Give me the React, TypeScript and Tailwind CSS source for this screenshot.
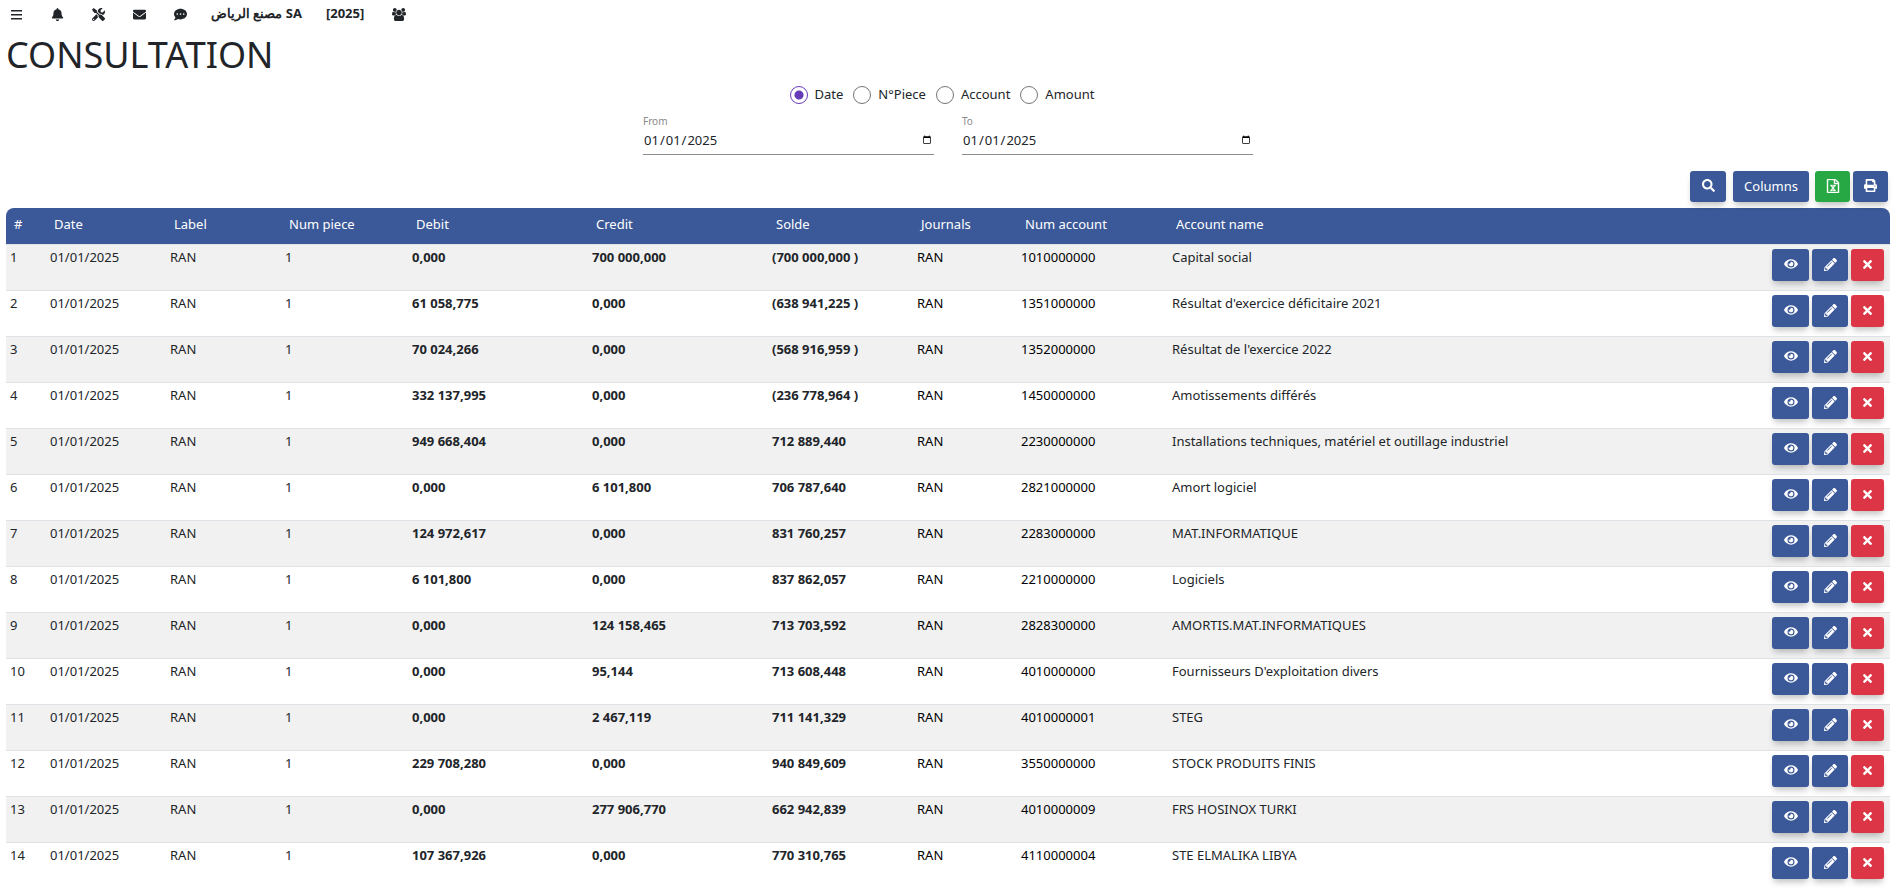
import { useState } from "react";
import {
  FaBell,
  FaCommentDots,
  FaEnvelope,
  FaEye,
  FaPencilAlt,
  FaPrint,
  FaSearch,
  FaTimes,
  FaTools,
} from "react-icons/fa";

interface Entry {
  debit: string;
  credit: string;
  solde: string;
  account: string;
  name: string;
}

const entries: Entry[] = [
  { debit: "0,000", credit: "700 000,000", solde: "(700 000,000 )", account: "1010000000", name: "Capital social" },
  { debit: "61 058,775", credit: "0,000", solde: "(638 941,225 )", account: "1351000000", name: "Résultat d'exercice déficitaire 2021" },
  { debit: "70 024,266", credit: "0,000", solde: "(568 916,959 )", account: "1352000000", name: "Résultat de l'exercice 2022" },
  { debit: "332 137,995", credit: "0,000", solde: "(236 778,964 )", account: "1450000000", name: "Amotissements différés" },
  { debit: "949 668,404", credit: "0,000", solde: "712 889,440", account: "2230000000", name: "Installations techniques, matériel et outillage industriel" },
  { debit: "0,000", credit: "6 101,800", solde: "706 787,640", account: "2821000000", name: "Amort logiciel" },
  { debit: "124 972,617", credit: "0,000", solde: "831 760,257", account: "2283000000", name: "MAT.INFORMATIQUE" },
  { debit: "6 101,800", credit: "0,000", solde: "837 862,057", account: "2210000000", name: "Logiciels" },
  { debit: "0,000", credit: "124 158,465", solde: "713 703,592", account: "2828300000", name: "AMORTIS.MAT.INFORMATIQUES" },
  { debit: "0,000", credit: "95,144", solde: "713 608,448", account: "4010000000", name: "Fournisseurs D'exploitation divers" },
  { debit: "0,000", credit: "2 467,119", solde: "711 141,329", account: "4010000001", name: "STEG" },
  { debit: "229 708,280", credit: "0,000", solde: "940 849,609", account: "3550000000", name: "STOCK PRODUITS FINIS" },
  { debit: "0,000", credit: "277 906,770", solde: "662 942,839", account: "4010000009", name: "FRS HOSINOX TURKI" },
  { debit: "107 367,926", credit: "0,000", solde: "770 310,765", account: "4110000004", name: "STE ELMALIKA LIBYA" },
];

const columns = [
  { label: "#", width: "w-10" },
  { label: "Date", width: "w-30" },
  { label: "Label", width: "w-[115px]" },
  { label: "Num piece", width: "w-[127px]" },
  { label: "Debit", width: "w-45" },
  { label: "Credit", width: "w-45" },
  { label: "Solde", width: "w-[145px]" },
  { label: "Journals", width: "w-26" },
  { label: "Num account", width: "w-[151px]" },
  { label: "Account name", width: "" },
];

const navIcons = [
  { label: "Menu", href: "#menu", Icon: MenuIcon },
  { label: "Alerts", href: "#alerts", Icon: FaBell },
  { label: "Tools", href: "#tools", Icon: FaTools },
  { label: "Mail", href: "#mail", Icon: FaEnvelope },
  { label: "Chat", href: "#chat", Icon: FaCommentDots },
];

const filters = ["Date", "N°Piece", "Account", "Amount"];

const buttonBase =
  "flex items-center justify-center rounded-[3px] text-white shadow-[0_5px_6px_-2px_rgba(0,0,0,0.25)]";

function MenuIcon({ size }: { size?: number }) {
  return (
    <svg viewBox="0 0 13 13" width={size} height={size} fill="currentColor" aria-hidden>
      <path d="M1 2h11v1.6H1zM1 6h11v1.6H1zM1 10h11v1.6H1z" />
    </svg>
  );
}

function UsersIcon() {
  return (
    <svg viewBox="0 0 1920 1792" width="14" height="13" fill="currentColor" aria-hidden>
      <path d="M593 896q-162 5-265 128h-134q-82 0-138-40.5t-56-118.5q0-353 124-353 6 0 43.5 21t97.5 42.5 119 21.5q67 0 133-23-5 37-5 66 0 139 81 256zm1071 637q0 120-73 189.5t-194 69.5h-874q-121 0-194-69.5t-73-189.5q0-53 3.5-103.5t14-109 26.5-108.5 43-97.5 62-81 85.5-53.5 111.5-20q10 0 43 21.5t73 48 107 48 135 21.5 135-21.5 107-48 73-48 43-21.5q61 0 111.5 20t85.5 53.5 62 81 43 97.5 26.5 108.5 14 109 3.5 103.5zm-1024-1277q0 106-75 181t-181 75-181-75-75-181 75-181 181-75 181 75 75 181zm704 384q0 159-112.5 271.5t-271.5 112.5-271.5-112.5-112.5-271.5 112.5-271.5 271.5-112.5 271.5 112.5 112.5 271.5zm576 225q0 78-56 118.5t-138 40.5h-134q-103-123-265-128 81-117 81-256 0-29-5-66 66 23 133 23 59 0 119-21.5t97.5-42.5 43.5-21q124 0 124 353zm-128-609q0 106-75 181t-181 75-181-75-75-181 75-181 181-75 181 75 75 181z" />
    </svg>
  );
}

function ExcelIcon() {
  return (
    <svg viewBox="0 0 1792 1792" width="14" height="14" fill="currentColor" stroke="currentColor" strokeWidth="50" aria-hidden>
      <path d="M1596 380q28 28 48 76t20 88v1152q0 40-28 68t-68 28h-1344q-40 0-68-28t-28-68v-1600q0-40 28-68t68-28h896q40 0 88 20t76 48zm-444-244v376h376q-10-29-22-41l-313-313q-12-12-41-22zm384 1528v-1024h-416q-40 0-68-28t-28-68v-416h-768v1536h1280zm-979-234v106h281v-106h-75l103-161q5-7 10-16.5t7.5-13.5 3.5-4h2q1 4 5 10 2 4 4.5 7.5t6 8 6.5 8.5l107 161h-76v106h291v-106h-68l-192-273 195-282h67v-107h-279v107h74l-103 159q-4 7-10 16.5t-9 13.5l-2 3h-2q-1-4-5-10-6-11-17-23l-106-159h76v-107h-290v107h68l189 272-194 283h-68z" />
    </svg>
  );
}

function DateField({ id, label }: { id: string; label: string }) {
  return (
    <div className="border-b border-[#8c8c8c]">
      <label htmlFor={id} className="block pt-px text-[10px] leading-3 text-[#8a8a8a]">
        {label}
      </label>
      <input
        id={id}
        type="date"
        defaultValue="2025-01-01"
        className="block h-[27px] w-full bg-transparent pb-0.5 text-[13px] text-[#212529] outline-none [&::-webkit-calendar-picker-indicator]:size-[10px]"
      />
    </div>
  );
}

export default function App() {
  const [filter, setFilter] = useState("Date");

  return (
    <div className="pr-2.5 pl-1.5 font-['Noto_Sans',sans-serif] text-[13px] leading-5 text-[#212529]">
      <nav className="flex h-7 items-center">
        {navIcons.map(({ label, href, Icon }) => (
          <a key={label} href={href} aria-label={label} className="flex w-[41px] pl-1">
            <Icon size={13} />
          </a>
        ))}
        <a href="#company" className="pb-0.5 font-bold">مصنع الرياض SA</a>
        <a href="#year" className="ml-6 pb-0.5 font-bold">[2025]</a>
        <a href="#users" aria-label="Users" className="ml-7"><UsersIcon /></a>
      </nav>

      <h1 className="text-4xl leading-[54px]">CONSULTATION</h1>

      <form>
        <fieldset className="flex h-6 items-center justify-center gap-2.5 pt-0.5 pr-3">
          {filters.map((name) => (
            <label key={name} className="flex items-center gap-[7px]">
              <input
                type="radio"
                name="filter"
                checked={filter === name}
                onChange={() => setFilter(name)}
                className="size-[18px] appearance-none rounded-full border border-[#757575] checked:border-[#673ab7] checked:bg-[radial-gradient(circle,#673ab7_0_4px,transparent_5px)]"
              />
              <span className="pb-0.5">{name}</span>
            </label>
          ))}
        </fieldset>
        <div className="mx-auto mt-2 grid max-w-[610px] grid-cols-2 gap-7">
          <DateField id="from" label="From" />
          <DateField id="to" label="To" />
        </div>
      </form>

      <div className="mt-4 mr-0.5 flex h-[31px] justify-end">
        <button type="button" aria-label="Search" className={`${buttonBase} mr-[7px] w-9 bg-[#3b5998] pb-0.5`}><FaSearch /></button>
        <button type="button" className={`${buttonBase} mr-1.5 w-19 bg-[#3b5998] pb-0.5`}>Columns</button>
        <button type="button" aria-label="Export" className={`${buttonBase} mr-[3px] w-[35px] bg-[#28a745] pb-0.5`}><ExcelIcon /></button>
        <button type="button" aria-label="Print" className={`${buttonBase} w-[35px] bg-[#3b5998] pb-0.5`}><FaPrint /></button>
      </div>

      <div className="mt-1.5 overflow-hidden rounded-t-lg">
        <table className="w-full table-fixed border-collapse">
          <thead className="bg-[#3b5998] text-white">
            <tr className="h-9">
              {columns.map((column) => (
                <th key={column.label} className={`${column.width} pb-1 pl-2 text-left font-normal`}>
                  {column.label}
                </th>
              ))}
              <th className="w-[122px]" aria-label="Actions" />
            </tr>
          </thead>
          <tbody>
            {entries.map((entry, index) => (
              <tr key={entry.account} className="border-t border-[#dee2e6] align-top odd:bg-[#f1f1f1]">
                <td className="px-1 py-0.5">{index + 1}</td>
                <td className="px-1 py-0.5">01/01/2025</td>
                <td className="px-1 py-0.5">RAN</td>
                <td className="px-1 py-0.5">1</td>
                <td className="px-1 py-0.5 font-bold">{entry.debit}</td>
                <td className="px-1 py-0.5 font-bold">{entry.credit}</td>
                <td className="px-1 py-0.5 font-bold">{entry.solde}</td>
                <td className="px-1 py-0.5 text-black">RAN</td>
                <td className="px-1 py-0.5 text-black">{entry.account}</td>
                <td className="px-1 py-0.5">{entry.name}</td>
                <td className="pt-1 pr-1.5 pb-[9px] pl-1">
                  <div className="flex h-8 gap-[3px]">
                    <button type="button" aria-label="View" className={`${buttonBase} w-[37px] bg-[#3b5998] pb-0.5`}><FaEye size={14} /></button>
                    <button type="button" aria-label="Edit" className={`${buttonBase} w-9 bg-[#3b5998]`}><FaPencilAlt /></button>
                    <button type="button" aria-label="Delete" className={`${buttonBase} w-[33px] bg-[#dc3545]`}><FaTimes /></button>
                  </div>
                </td>
              </tr>
            ))}
          </tbody>
        </table>
      </div>
    </div>
  );
}
